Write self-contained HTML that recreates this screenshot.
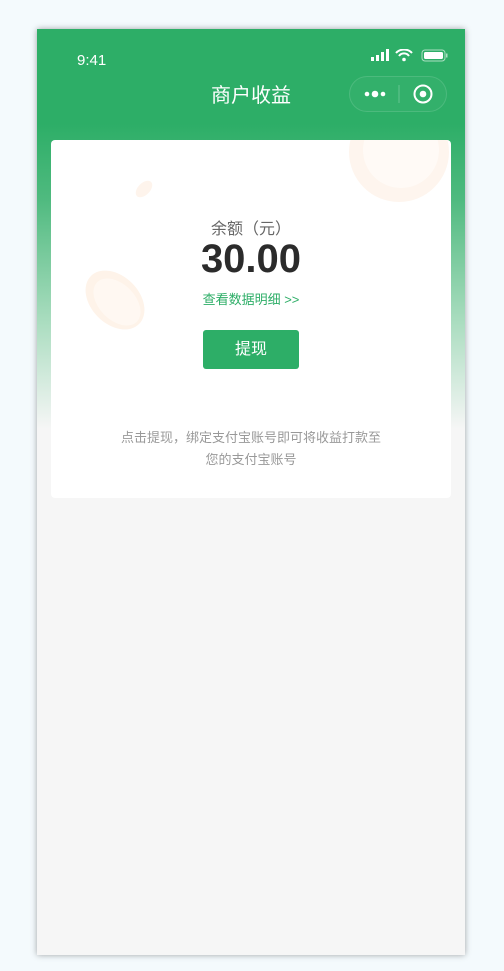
<!DOCTYPE html>
<html><head><meta charset="utf-8"><style>
*{margin:0;padding:0;box-sizing:border-box}
body{width:504px;height:971px;background:#f4fafd;position:relative;overflow:hidden;font-family:"Liberation Sans","Noto Sans CJK SC",sans-serif}
.phone{position:absolute;left:37px;top:29px;width:428px;height:926px;background:#f6f6f6;box-shadow:0 0 6px rgba(0,0,0,.35);overflow:hidden}
.grad{position:absolute;left:0;top:0;width:428px;height:420px;background:linear-gradient(#2dae67 0,#2dae67 95px,#4fba7f 170px,#a8dcbe 290px,#f6f6f6 400px)}
.time{position:absolute;left:40px;top:23px;color:#fff;font-size:15px}
.title{position:absolute;left:0;width:428px;top:50px;text-align:center;color:#fff;font-size:20px}
.cap{position:absolute;left:312px;top:47px;width:98px;height:36px;border-radius:18px;border:1px solid rgba(255,255,255,.12);background:rgba(255,255,255,.03)}
.card{position:absolute;left:14px;top:111px;width:400px;height:358px;background:#fff;border-radius:4px;overflow:hidden}
.c{position:absolute;left:0;width:400px;text-align:center}
.btn{position:absolute;left:152px;top:190px;width:96px;height:39px;background:#2dae67;border-radius:3px;color:#fff;font-size:16px;text-align:center;line-height:39px}
</style></head><body>
<div class="phone">
<div class="grad"></div>
<div class="time">9:41</div>
<svg style="position:absolute;left:334px;top:20px" width="80" height="14">
<rect x="0" y="8" width="3" height="4" fill="#fff"/><rect x="5" y="6" width="3" height="6" fill="#fff"/><rect x="10" y="3" width="3" height="9" fill="#fff"/><rect x="15" y="0" width="3" height="12" fill="#fff"/>
<path d="M25 4a11 11 0 0 1 16 0M28 7a6 6 0 0 1 10 0" stroke="#fff" stroke-width="2" fill="none"/><circle cx="33" cy="10.5" r="1.8" fill="#fff"/>
<rect x="51" y="1" width="23" height="11" rx="3" fill="none" stroke="#fff" stroke-opacity=".6"/><rect x="53" y="3" width="19" height="7" rx="1.5" fill="#fff"/><rect x="75" y="4.5" width="1.5" height="4" fill="#fff" fill-opacity=".6"/>
</svg>
<div class="title">商户收益</div>
<div class="cap">
<svg width="98" height="36" style="position:absolute;left:-1px;top:-1px">
<circle cx="18" cy="18" r="2.3" fill="#fff"/><circle cx="26" cy="18" r="3.3" fill="#fff"/><circle cx="34" cy="18" r="2.3" fill="#fff"/>
<line x1="50" y1="9" x2="50" y2="27" stroke="rgba(255,255,255,.25)"/>
<circle cx="74" cy="18" r="8.5" stroke="#fff" stroke-width="2" fill="none"/><circle cx="74" cy="18" r="3.3" fill="#fff"/>
</svg></div>
<div class="card">
<svg width="400" height="358" style="position:absolute;left:0;top:0">
<circle cx="348" cy="12" r="50" fill="#fef5ee"/><circle cx="350" cy="10" r="38" fill="#fffaf6"/>
<ellipse cx="93" cy="49" rx="6" ry="10" transform="rotate(45 93 49)" fill="#fef4ec"/>
<ellipse cx="64" cy="160" rx="24" ry="34" transform="rotate(-45 64 160)" fill="#fef3e9"/>
<ellipse cx="66" cy="162" rx="18" ry="28" transform="rotate(-45 66 162)" fill="#fff8f2"/>
</svg>
<div class="c" style="top:75px;font-size:16px;color:#666">余额（元）</div>
<div class="c" style="top:97px;font-size:40px;color:#2b2b2b;font-weight:bold">30.00</div>
<div class="c" style="top:149px;font-size:13px;color:#2dae67">查看数据明细 &gt;&gt;</div>
<div class="btn">提现</div>
<div class="c" style="top:287px;font-size:13px;color:#999;line-height:22px">点击提现，绑定支付宝账号即可将收益打款至<br>您的支付宝账号</div>
</div>
</div>
</body></html>
